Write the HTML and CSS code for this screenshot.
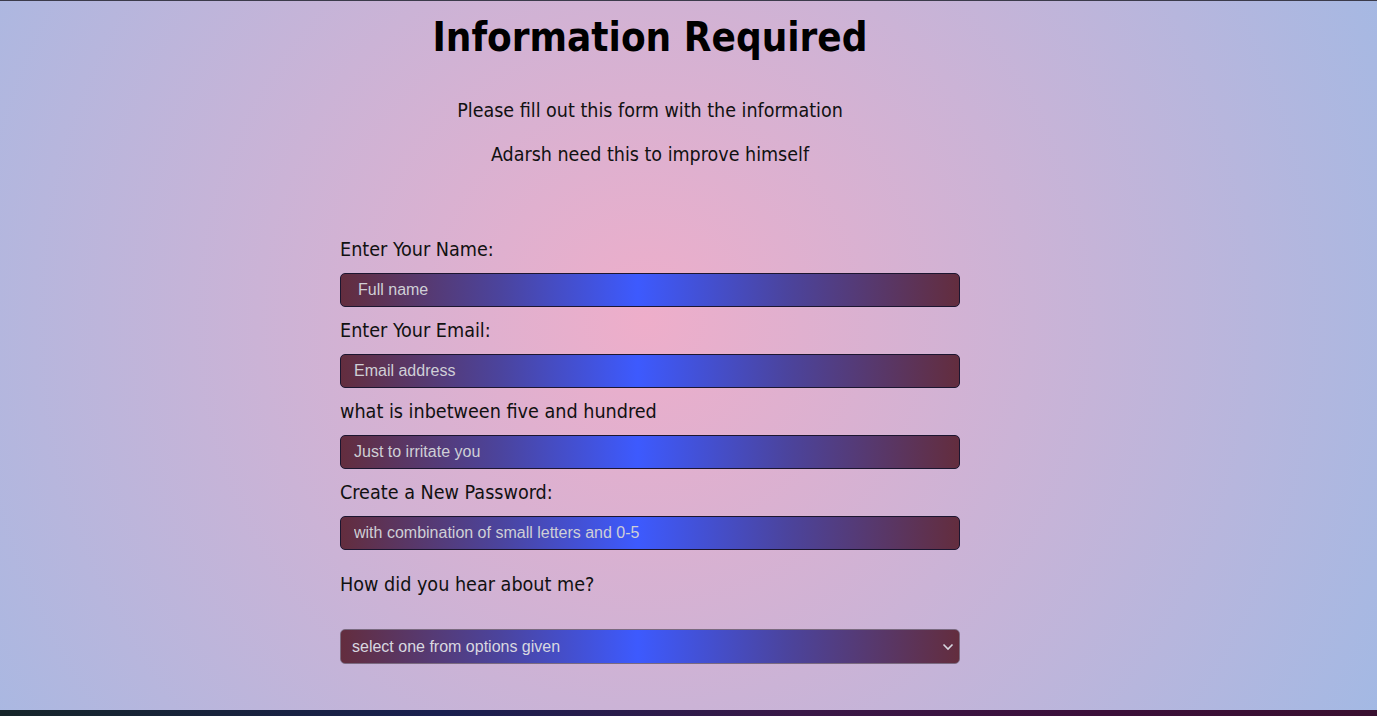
FILE: index.html
```html
<!DOCTYPE html>
<html lang="en">
<head>
<meta charset="utf-8">
<title>Information Required</title>
<link rel="stylesheet" href="styles.css">
</head>
<body>
<div class="topline"></div>
<main class="page">
  <header class="intro">
    <h1 class="title">Information Required</h1>
    <p class="lead">Please fill out this form with the information</p>
    <p class="lead">Adarsh need this to improve himself</p>
  </header>
  <form class="form">
    <label class="label" for="name">Enter Your Name:</label>
    <input class="field field-name" id="name" type="text" placeholder="Full name">
    <label class="label" for="email">Enter Your Email:</label>
    <input class="field" id="email" type="email" placeholder="Email address">
    <label class="label" for="num">what is inbetween five and hundred</label>
    <input class="field" id="num" type="text" placeholder="Just to irritate you">
    <label class="label" for="pass">Create a New Password:</label>
    <input class="field" id="pass" type="password" placeholder="with combination of small letters and 0-5">
    <label class="label label-select" for="hear">How did you hear about me?</label>
    <div class="select-wrap">
      <select class="field select" id="hear">
        <option>select one from options given</option>
        <option>Friends</option>
        <option>Social media</option>
        <option>Other</option>
      </select>
      <svg class="chevron" width="12" height="8" viewBox="0 0 12 8"><path d="M1.5 1.5 L6 6 L10.5 1.5" fill="none" stroke="#d8d8e0" stroke-width="1.6"/></svg>
    </div>
  </form>
</main>
<div class="taskbar"></div>
</body>
</html>
```
FILE: styles.css
```css
html, body {
  margin: 0;
  padding: 0;
  height: 100%;
}
body {
  display: flex;
  flex-direction: column;
  min-height: 100vh;
  overflow: hidden;
  background: radial-gradient(circle 1000px at 645px 320px, rgb(238,174,202) 0%, rgb(148,187,233) 100%);
  font-family: "DejaVu Sans Condensed", "DejaVu Sans", sans-serif;
  color: #111;
}
.topline {
  height: 1px;
  background: #3b3b4b;
  flex: none;
}
.page {
  flex: 1;
  width: 620px;
  margin-left: 340px;
}
.intro {
  text-align: center;
}
.title {
  margin: 14px 0 0;
  font-size: 40px;
  line-height: 44px;
  font-weight: bold;
  color: #000;
}
.lead {
  margin: 40px 0 0;
  font-size: 19.5px;
  line-height: 24px;
}
.lead + .lead {
  margin-top: 20px;
}
.form {
  display: flex;
  flex-direction: column;
  margin-top: 71px;
}
.label {
  font-size: 19.6px;
  line-height: 24px;
  margin: 0 0 11px;
}
.field + .label {
  margin-top: 12px;
}
.field {
  box-sizing: border-box;
  width: 620px;
  height: 34px;
  margin: 0;
  padding: 0 13px;
  border: 1px solid #1c1630;
  border-radius: 5px;
  background: linear-gradient(90deg, #632d3e 0%, #4b449e 26%, #3d5afe 48%, #4b449e 72%, #632d3e 100%);
  font-family: "Liberation Sans", Arial, sans-serif;
  font-size: 16px;
  color: #e0e0e0;
  outline: none;
}
.field-name {
  padding-left: 17px;
}
.field::placeholder {
  color: #cfcfd6;
  opacity: 1;
}
.field + .label-select {
  margin-top: 23px;
  margin-bottom: 32px;
}
.select-wrap {
  position: relative;
  width: 620px;
}
.select {
  appearance: none;
  -webkit-appearance: none;
  height: 35px;
  padding-left: 11px;
  border-color: #7a6a80;
  color: #d8d8e0;
}
.chevron {
  position: absolute;
  right: 6px;
  top: 14px;
  pointer-events: none;
}
.taskbar {
  flex: none;
  height: 6px;
  background: linear-gradient(90deg, #16262a 0%, #1a2050 32%, #3a1848 58%, #3c0f3a 80%, #3a1030 100%);
}
```
